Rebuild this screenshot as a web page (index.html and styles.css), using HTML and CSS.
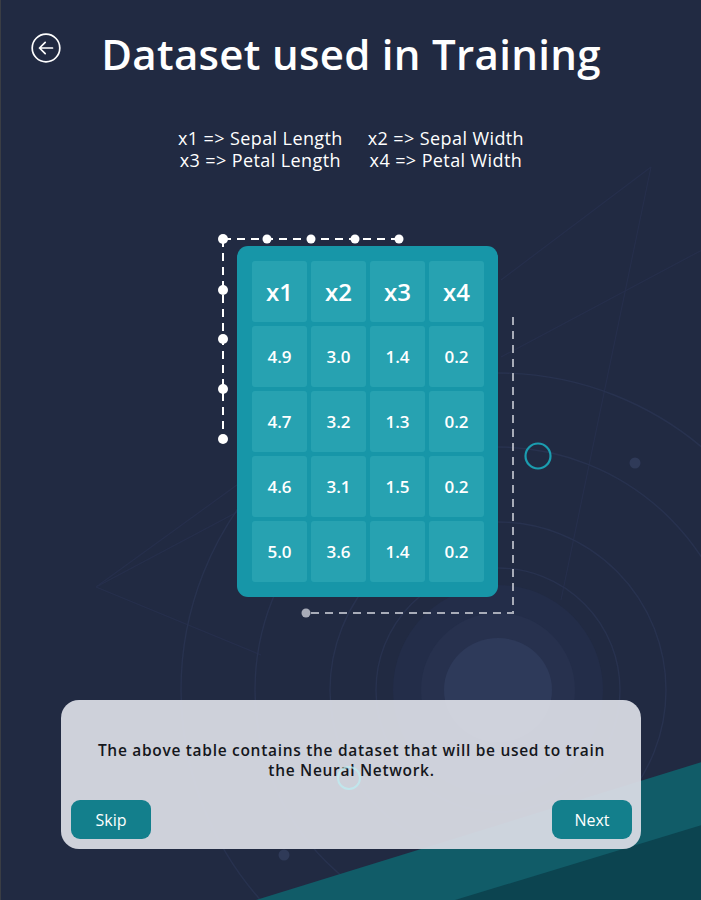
FILE: index.html
```html
<!DOCTYPE html>
<html lang="en">
<head>
<meta charset="utf-8">
<title>Dataset used in Training</title>
<link rel="stylesheet" href="styles.css">
</head>
<body>
<div class="screen">
  <svg class="bg" width="701" height="900" viewBox="0 0 701 900" aria-hidden="true">
    <g fill="none" stroke="#262f4c" stroke-width="1.1">
      <line x1="500" y1="280" x2="650" y2="167"/>
      <line x1="650" y1="167" x2="560" y2="600"/>
      <line x1="500" y1="357" x2="701" y2="250"/>
      <line x1="95" y1="587" x2="240" y2="482"/>
      <line x1="95" y1="587" x2="240" y2="510"/>
      <line x1="95" y1="587" x2="260" y2="655"/>
    </g>
    <circle cx="497" cy="690" r="105" fill="#232d49"/>
    <circle cx="497" cy="690" r="77" fill="#27314e"/>
    <ellipse cx="497" cy="690" rx="54" ry="52" fill="#2e3a5a"/>
    <g fill="none" stroke="#28324f" stroke-width="1.4">
      <circle cx="497" cy="690" r="122"/>
      <circle cx="497" cy="690" r="168"/>
      <circle cx="497" cy="690" r="243"/>
      <circle cx="497" cy="690" r="317"/>
    </g>
    <circle cx="634" cy="463" r="5.5" fill="#2f3a58"/>
    <circle cx="283" cy="855" r="5.5" fill="#2f3a58"/>
    <polygon points="255,900 701,762 701,900" fill="#115c68"/>
    <polygon points="454,900 701,825 701,900" fill="#0c4450"/>
    <circle cx="537" cy="456" r="12.5" fill="none" stroke="#1b9db0" stroke-width="2.2"/>
  </svg>

  <header class="top">
    <button class="back" aria-label="Back">
      <svg width="30" height="30" viewBox="0 0 30 30">
        <circle cx="15" cy="15" r="13.8" fill="none" stroke="#fff" stroke-width="1.7"/>
        <path d="M8.5 15H21.5M14.2 9.3L8.5 15L14.2 20.7" fill="none" stroke="#fff" stroke-width="1.7" stroke-linecap="round" stroke-linejoin="round"/>
      </svg>
    </button>
    <h1 class="title">Dataset used in Training</h1>
  </header>

  <div class="legend">
    <div class="legend-col">
      <span>x1 =&gt; Sepal Length</span>
      <span>x3 =&gt; Petal Length</span>
    </div>
    <div class="legend-col">
      <span>x2 =&gt; Sepal Width</span>
      <span>x4 =&gt; Petal Width</span>
    </div>
  </div>

  <section class="table-area">
    <svg class="frame" width="701" height="400" viewBox="0 230 701 400" aria-hidden="true">
      <g fill="none" stroke-width="2" stroke-dasharray="8 6">
        <path d="M222 240H398" stroke="#fff"/>
        <path d="M222 240V440" stroke="#fff"/>
        <path d="M512 318V614H305" stroke="#a8acb8"/>
      </g>
      <g fill="#fff">
        <circle cx="222" cy="240" r="5"/>
        <circle cx="266" cy="240" r="4.5"/>
        <circle cx="310" cy="240" r="4.5"/>
        <circle cx="354" cy="240" r="4.5"/>
        <circle cx="398" cy="240" r="4.5"/>
        <circle cx="222" cy="291" r="5"/>
        <circle cx="222" cy="340" r="5"/>
        <circle cx="222" cy="390" r="5"/>
        <circle cx="222" cy="440" r="5"/>
      </g>
      <circle cx="305" cy="614" r="4.5" fill="#a8acb8"/>
    </svg>
    <div class="card">
      <div class="cell head">x1</div><div class="cell head">x2</div><div class="cell head">x3</div><div class="cell head">x4</div>
      <div class="cell">4.9</div><div class="cell">3.0</div><div class="cell">1.4</div><div class="cell">0.2</div>
      <div class="cell">4.7</div><div class="cell">3.2</div><div class="cell">1.3</div><div class="cell">0.2</div>
      <div class="cell">4.6</div><div class="cell">3.1</div><div class="cell">1.5</div><div class="cell">0.2</div>
      <div class="cell">5.0</div><div class="cell">3.6</div><div class="cell">1.4</div><div class="cell">0.2</div>
    </div>
  </section>

  <div class="dialog">
    <p class="dialog-text">The above table contains the dataset that will be used to train the Neural Network.</p>
    <div class="dialog-actions">
      <button class="btn">Skip</button>
      <button class="btn">Next</button>
    </div>
    <span class="spinner-ring" aria-hidden="true"></span>
  </div>
</div>
</body>
</html>
```

FILE: styles.css
```css
* { box-sizing: border-box; }

html, body {
  margin: 0;
  padding: 0;
  background: #212a42;
}

.screen {
  position: relative;
  width: 701px;
  height: 900px;
  overflow: hidden;
  background: #212a42;
  border-left: 1px solid #3a3d44;
  font-family: "Open Sans", "Noto Sans", sans-serif;
  color: #fff;
}

.bg {
  position: absolute;
  left: 0;
  top: 0;
  z-index: 0;
}

.top {
  position: relative;
  z-index: 1;
  display: grid;
  grid-template-columns: 1fr auto 1fr;
  align-items: center;
  padding-top: 31px;
  height: 77px;
}

.back {
  justify-self: start;
  margin-left: 30px;
  margin-top: -12px;
  padding: 0;
  border: 0;
  background: none;
  width: 30px;
  height: 30px;
  cursor: pointer;
}

.back svg { display: block; }

.title {
  margin: 0;
  font-size: 42px;
  font-weight: 600;
  line-height: 1;
  letter-spacing: 0.3px;
  white-space: nowrap;
}

.legend {
  position: relative;
  z-index: 1;
  display: flex;
  justify-content: center;
  gap: 25px;
  margin-top: 50px;
  font-size: 18px;
  font-weight: 500;
  line-height: 22px;
  letter-spacing: 0.4px;
}

.legend-col {
  display: flex;
  flex-direction: column;
  align-items: center;
}

.table-area {
  position: relative;
  z-index: 1;
  margin-top: 58px;
  padding-top: 17px;
  padding-left: 236px;
}

.frame {
  position: absolute;
  left: 0;
  top: 0;
  pointer-events: none;
}

.card {
  position: relative;
  width: 261px;
  padding: 15px;
  display: grid;
  grid-template-columns: repeat(4, 55px);
  grid-auto-rows: 61px;
  gap: 4px;
  background: #1796a8;
  border-radius: 11px;
}

.cell {
  display: flex;
  align-items: center;
  justify-content: center;
  background: #27a2b1;
  border-radius: 3px;
  font-size: 17px;
  font-weight: 600;
  color: #fff;
}

.cell.head {
  font-size: 24px;
  font-weight: 600;
}

.dialog {
  position: absolute;
  z-index: 2;
  left: 60px;
  top: 700px;
  width: 580px;
  height: 149px;
  padding: 40px 9px 10px 10px;
  display: flex;
  flex-direction: column;
  justify-content: space-between;
  background: rgba(220, 222, 230, 0.93);
  border-radius: 18px;
}

.dialog-text {
  margin: 0 auto;
  max-width: 520px;
  text-align: center;
  color: #15171c;
  font-size: 15.5px;
  font-weight: 600;
  line-height: 20px;
  letter-spacing: 0.7px;
}

.dialog-actions {
  display: flex;
  justify-content: space-between;
}

.btn {
  width: 80px;
  height: 39px;
  border: 0;
  border-radius: 9px;
  background: #137f8c;
  color: #fff;
  font-family: inherit;
  font-size: 16px;
  font-weight: 500;
  cursor: pointer;
}

.spinner-ring {
  position: absolute;
  left: 276px;
  top: 66px;
  width: 24px;
  height: 24px;
  border: 2px solid rgba(190, 235, 240, 0.8);
  border-radius: 50%;
  pointer-events: none;
}
```
